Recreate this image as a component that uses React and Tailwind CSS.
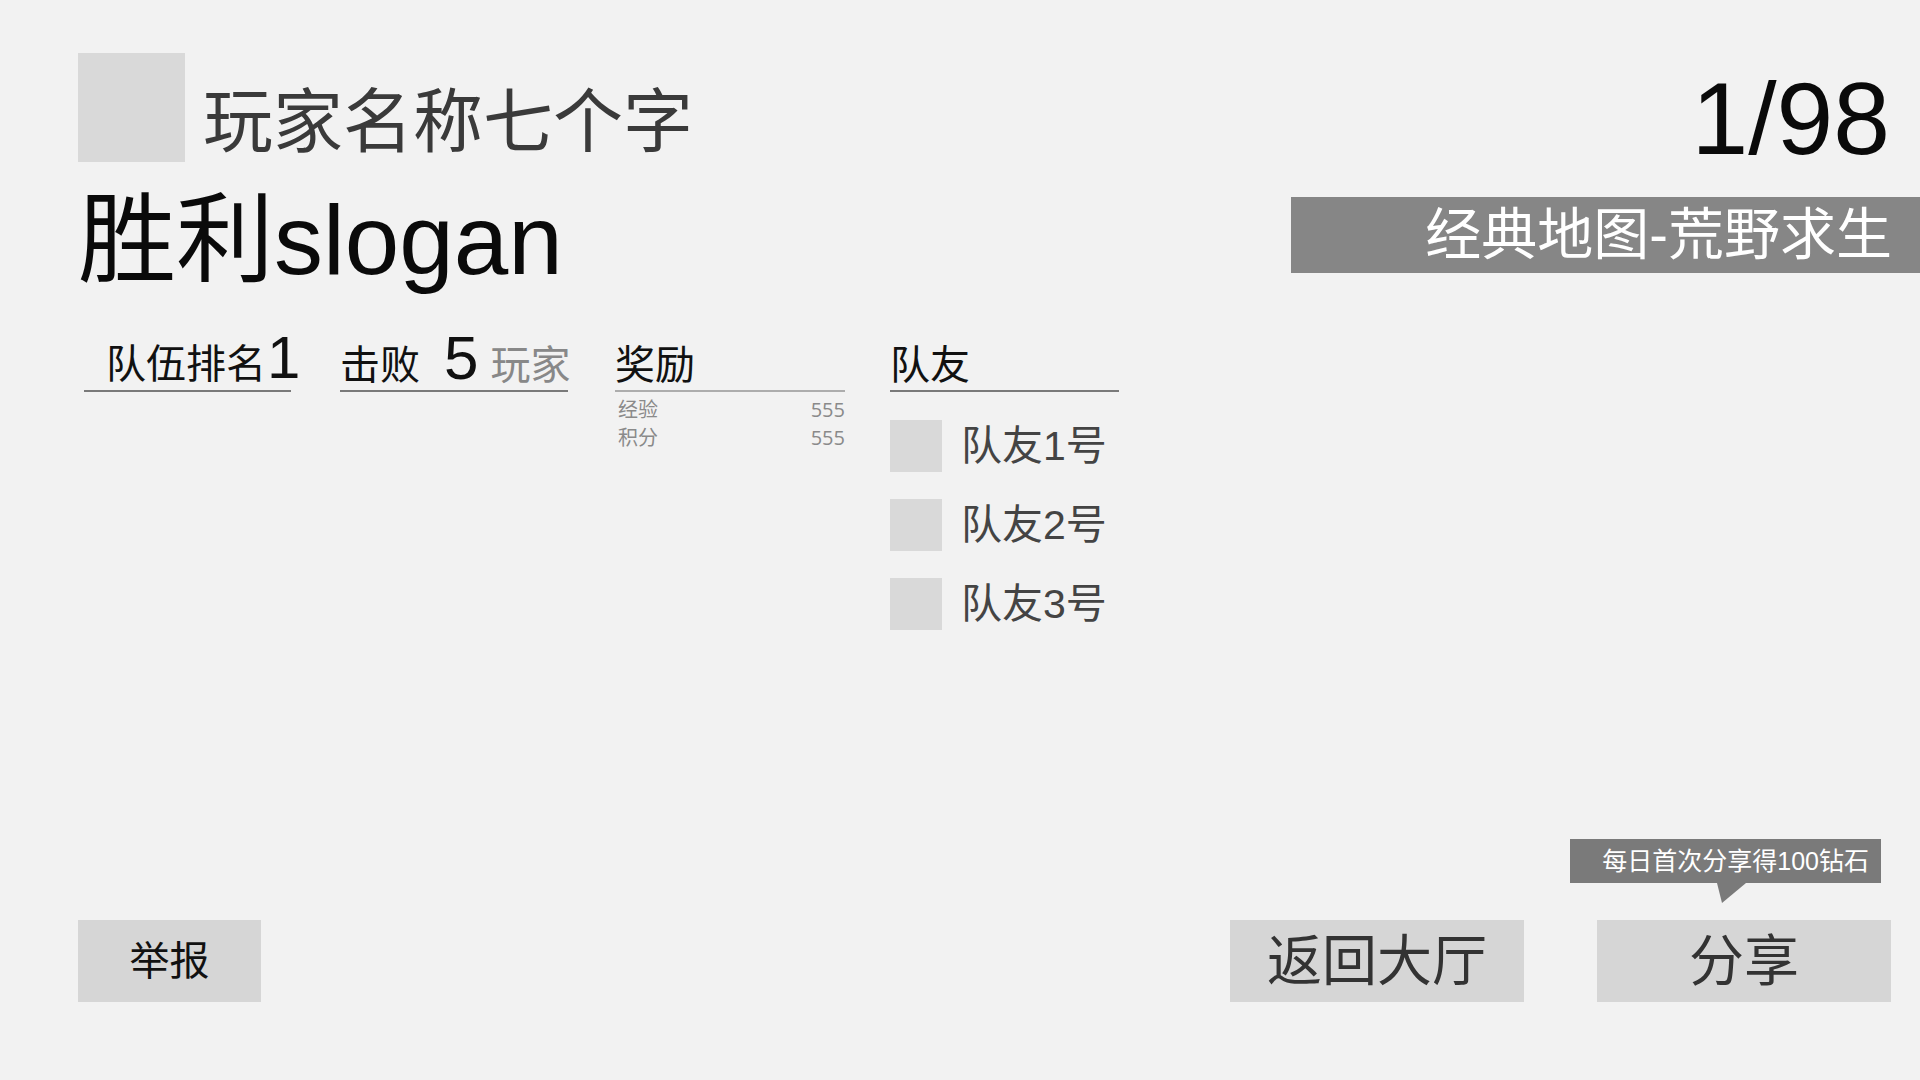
import React from 'react';

const teammates = ['队友1号', '队友2号', '队友3号'];

const rewards = [
  { label: '经验', value: 555 },
  { label: '积分', value: 555 },
];

const App = () => {
  return (
    <div className="w-[1920px] h-[1080px] bg-[#f2f2f2] flex flex-col pl-[78px] pt-[53px] pb-[78px] font-['Liberation_Sans','Noto_Sans_CJK_SC',sans-serif] overflow-hidden">
      <div className="flex justify-between items-start">
        {/* Left: player info + stats */}
        <div className="flex flex-col">
          <div className="flex items-end">
            <div className="w-[107px] h-[109px] bg-[#d9d9d9]" />
            <div className="ml-[18px] mb-[4px] text-[70px] leading-none text-[#3a3a3a] whitespace-nowrap">玩家名称七个字</div>
          </div>
          <div className="mt-[29px] text-[98px] leading-none text-[#0a0a0a] whitespace-nowrap">胜利slogan</div>

          {/* Stats row */}
          <div className="flex mt-[44px] ml-[6px] whitespace-nowrap">
            <div className="w-[207px] shrink-0">
              <div className="h-[59px] flex items-baseline pl-[22px] border-b-2 border-[#7a7a7a] text-[#111]">
                <span className="text-[40px] leading-none">队伍排名</span>
                <span className="text-[60px] leading-[50px] ml-[1px]">1</span>
              </div>
            </div>
            <div className="w-[228px] ml-[49px] shrink-0">
              <div className="h-[59px] flex items-baseline border-b-2 border-[#7a7a7a] text-[#111]">
                <span className="text-[40px] leading-none">击败</span>
                <span className="text-[62px] leading-[50px] ml-[24px]">5</span>
                <span className="text-[40px] leading-none ml-[12px] text-[#888]">玩家</span>
              </div>
            </div>
            <div className="w-[230px] ml-[47px] shrink-0">
              <div className="h-[59px] flex items-baseline border-b-2 border-[#adadad] text-[#111]">
                <span className="text-[40px] leading-none">奖励</span>
                <span className="text-[62px] leading-[50px] invisible">0</span>
              </div>
              <div className="mt-[4px] flex flex-col text-[20px] leading-[28px] text-[#8a8a8a]">
                {rewards.map((r) => (
                  <div key={r.label} className="flex justify-between pl-[3px]">
                    <span>{r.label}</span>
                    <span className="font-['Open_Sans',sans-serif]">{r.value}</span>
                  </div>
                ))}
              </div>
            </div>
            <div className="w-[229px] ml-[45px] shrink-0">
              <div className="h-[59px] flex items-baseline border-b-2 border-[#7a7a7a] text-[#111]">
                <span className="text-[40px] leading-none">队友</span>
                <span className="text-[62px] leading-[50px] invisible">0</span>
              </div>
              <div className="mt-[28px] flex flex-col gap-[27px]">
                {teammates.map((name) => (
                  <div key={name} className="flex items-center">
                    <div className="w-[52px] h-[52px] bg-[#d9d9d9]" />
                    <span className="ml-[19px] text-[41px] leading-none text-[#444]">{name}</span>
                  </div>
                ))}
              </div>
            </div>
          </div>
        </div>

        {/* Right: rank + map */}
        <div className="flex flex-col items-end">
          <div className="mt-[15px] pr-[30px] text-[102px] leading-none text-[#0a0a0a]">1/98</div>
          <div className="mt-[27px] w-[629px] h-[76px] bg-[#868686] flex items-center justify-end pr-[28px]">
            <span className="text-[56px] leading-none text-white whitespace-nowrap">经典地图-荒野求生</span>
          </div>
        </div>
      </div>

      <div className="flex-1" />

      {/* Bottom buttons */}
      <div className="flex items-end justify-between pr-[29px]">
        <button className="w-[183px] h-[82px] bg-[#d6d6d6] flex items-center justify-center text-[40px] leading-none text-[#111]">
          举报
        </button>
        <div className="flex gap-[73px]">
          <button className="w-[294px] h-[82px] bg-[#d6d6d6] flex items-center justify-center text-[55px] leading-none text-[#333]">
            返回大厅
          </button>
          <div className="relative">
            <div className="absolute left-[-27px] top-[-81px] w-[311px] h-[44px] bg-[#7a7a7a] flex items-center justify-end pr-[12px]">
              <span className="text-[25px] leading-none text-white whitespace-nowrap">每日首次分享得100钻石</span>
              <svg className="absolute left-[147px] top-[44px]" width="30" height="20" viewBox="0 0 30 20">
                <polygon points="0,0 29,0 5,20" fill="#7a7a7a" />
              </svg>
            </div>
            <button className="w-[294px] h-[82px] bg-[#d6d6d6] flex items-center justify-center text-[55px] leading-none text-[#333]">
              分享
            </button>
          </div>
        </div>
      </div>
    </div>
  );
};

export default App;
